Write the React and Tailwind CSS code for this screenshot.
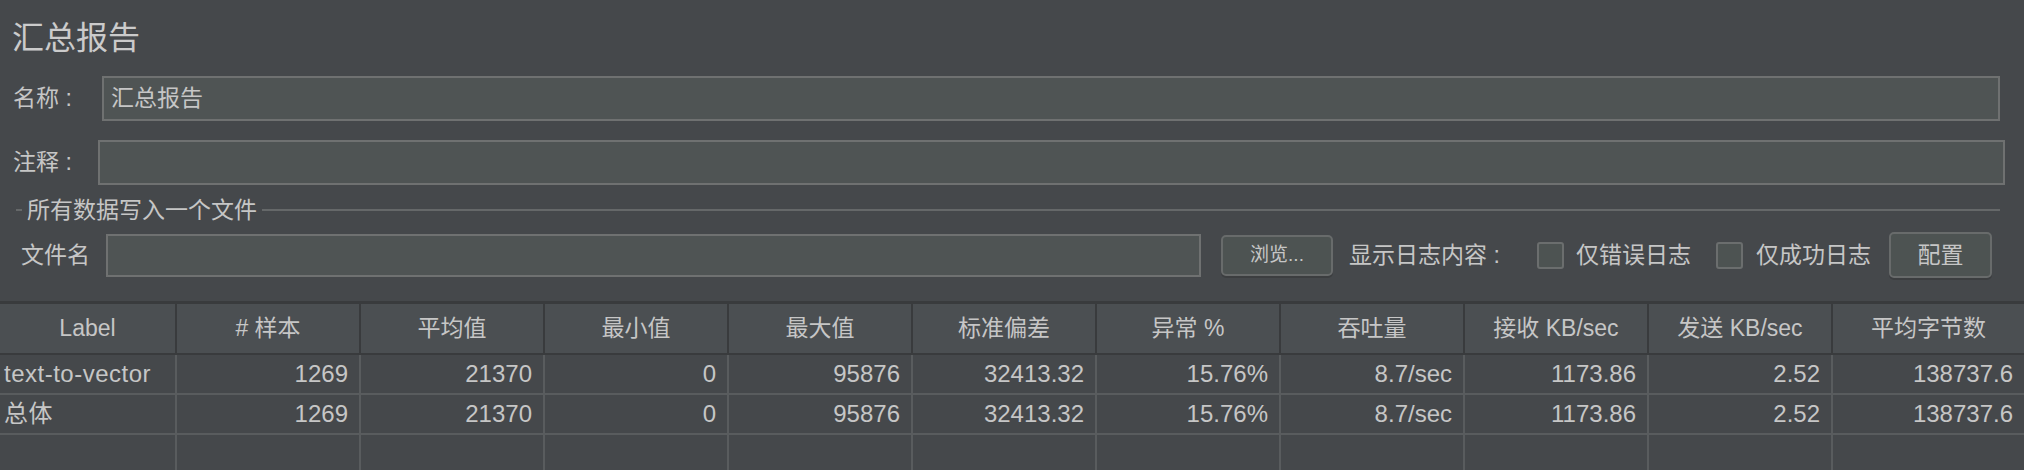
import React from "react";

const cols = [
  { title: "Label", w: "w-[177px]" },
  { title: "# 样本", w: "w-[184px]" },
  { title: "平均值", w: "w-[184px]" },
  { title: "最小值", w: "w-[184px]" },
  { title: "最大值", w: "w-[184px]" },
  { title: "标准偏差", w: "w-[184px]" },
  { title: "异常 %", w: "w-[184px]" },
  { title: "吞吐量", w: "w-[184px]" },
  { title: "接收 KB/sec", w: "w-[184px]" },
  { title: "发送 KB/sec", w: "w-[184px]" },
  { title: "平均字节数", w: "flex-1" },
];

const rows = [
  ["text-to-vector", "1269", "21370", "0", "95876", "32413.32", "15.76%", "8.7/sec", "1173.86", "2.52", "138737.6"],
  ["总体", "1269", "21370", "0", "95876", "32413.32", "15.76%", "8.7/sec", "1173.86", "2.52", "138737.6"],
];

function Checkbox() {
  return <div className="w-[27px] h-[27px] rounded-[3px] border-2 border-[#6b6e6e] bg-[#4d5352] shrink-0" />;
}

export default function App() {
  return (
    <div className="w-[2024px] h-[470px] overflow-hidden bg-[#45484b] text-[#c6c6c6] font-['Liberation_Sans','Noto_Sans_CJK_SC',sans-serif]">
      {/* title */}
      <div className="pt-[18px] pl-[12px] h-[58px] text-[32px] leading-[40px] text-[#cbcbcb]">汇总报告</div>

      {/* name */}
      <div className="flex items-center mt-[18px] pl-[13px]">
        <span className="w-[89px] text-[23px] leading-none whitespace-pre">名称 :</span>
        <div className="w-[1898px] h-[45px] border-2 border-[#6f7171] bg-[#4f5454] flex items-center pl-[7px] text-[23px]">
          汇总报告
        </div>
      </div>

      {/* comment */}
      <div className="flex items-center mt-[19px] pl-[13px]">
        <span className="w-[85px] text-[23px] leading-none whitespace-pre">注释 :</span>
        <div className="w-[1907px] h-[45px] border-2 border-[#6f7171] bg-[#4f5454]" />
      </div>

      {/* file section */}
      <div className="flex items-center mt-[10px] ml-[16px] mr-[24px] h-[30px]">
        <div className="w-[6px] h-[2px] bg-[#656869]" />
        <span className="px-[5px] text-[23px] leading-none">所有数据写入一个文件</span>
        <div className="flex-1 h-[2px] bg-[#656869]" />
      </div>

      <div className="flex items-center mt-[7px] h-[46px] pl-[21px] text-[23px]">
        <span className="w-[85px] leading-none">文件名</span>
        <div className="w-[1095px] h-[43px] border-2 border-[#6f7171] bg-[#4f5454]" />
        <button className="ml-[20px] w-[112px] h-[41px] rounded-[5px] border-2 border-[#686b6b] bg-[#4d5352] text-[19px] text-[#c6c6c6] shadow-[0_2px_0_#3c3e40]">
          浏览...
        </button>
        <span className="ml-[16px] w-[188px] leading-none whitespace-pre">显示日志内容 :</span>
        <Checkbox />
        <span className="ml-[12px] w-[140px] leading-none">仅错误日志</span>
        <Checkbox />
        <span className="ml-[13px] w-[133px] leading-none">仅成功日志</span>
        <button className="w-[103px] h-[46px] rounded-[5px] border-2 border-[#686b6b] bg-[#4d5352] text-[23px] text-[#c6c6c6] shadow-[0_2px_0_#3c3e40]">
          配置
        </button>
      </div>

      {/* table */}
      <div className="mt-[23px] border-t-[3px] border-[#393b3d]">
        <div className="flex h-[51px] bg-[#4b4f52] border-b-2 border-[#393b3d]">
          {cols.map((c, i) => (
            <div
              key={c.title}
              className={`${c.w} flex items-center justify-center text-[23px] ${i < cols.length - 1 ? "border-r-2 border-[#393b3d]" : ""}`}
            >
              {c.title}
            </div>
          ))}
        </div>
        {rows.map((r, ri) => (
          <div key={ri} className="flex h-[40px] border-b-2 border-[#595c5e]">
            {r.map((v, i) => (
              <div
                key={i}
                className={`${cols[i].w} flex items-center text-[24px] ${i === 0 ? "pl-[4px] tracking-[0.5px]" : "justify-end pr-[11px]"} ${i < r.length - 1 ? "border-r-2 border-[#595c5e]" : ""}`}
              >
                {v}
              </div>
            ))}
          </div>
        ))}
        <div className="flex h-[40px]">
          {cols.map((c, i) => (
            <div key={i} className={`${c.w} ${i < cols.length - 1 ? "border-r-2 border-[#595c5e]" : ""}`} />
          ))}
        </div>
      </div>
    </div>
  );
}
